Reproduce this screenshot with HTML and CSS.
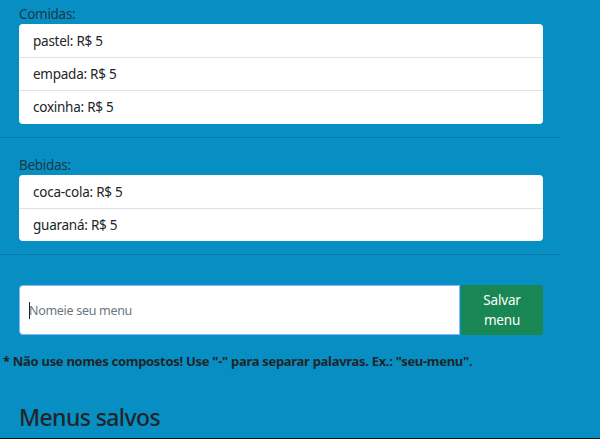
FILE: index.html
```html
<!DOCTYPE html>
<html lang="pt-BR">
<head>
<meta charset="utf-8">
<title>Menu</title>
<link rel="stylesheet" href="styles.css">
</head>
<body>
<main class="page">
  <section class="group group-first">
    <div class="group-label">Comidas:</div>
    <ul class="list">
      <li class="list-item">pastel: R$ 5</li>
      <li class="list-item">empada: R$ 5</li>
      <li class="list-item">coxinha: R$ 5</li>
    </ul>
  </section>
  <hr class="divider">
  <section class="group group-second">
    <div class="group-label">Bebidas:</div>
    <ul class="list">
      <li class="list-item">coca-cola: R$ 5</li>
      <li class="list-item">guaraná: R$ 5</li>
    </ul>
  </section>
  <hr class="divider">
  <form class="save-form">
    <div class="input-wrap"><span class="caret"></span><input class="name-input" type="text" placeholder="Nomeie seu menu"></div>
    <button class="save-btn" type="button">Salvar<br>menu</button>
  </form>
  <p class="note">* Não use nomes compostos! Use "-" para separar palavras. Ex.: "seu-menu".</p>
  <h2 class="saved-title">Menus salvos</h2>
</main>
</body>
</html>
```
FILE: styles.css
```css
* { box-sizing: border-box; }
html, body { margin: 0; padding: 0; }
body {
  background: #078fc3;
  font-family: "Noto Sans", "Open Sans", sans-serif;
  color: #212529;
  height: 439px;
  overflow: hidden;
  border-bottom: 1px solid #111;
}
.page { width: 560px; }
.group { padding: 17px 17px 0 19px; }
.group-first { padding-top: 4px; }
.group-label {
  font-size: 13.5px;
  letter-spacing: -0.3px;
  line-height: 20px;
  color: #173a48;
}
.list {
  list-style: none;
  margin: 0;
  padding: 0;
  background: #fff;
  border-radius: 4px;
  width: 524px;
}
.list-item {
  font-size: 13.5px;
  letter-spacing: -0.25px;
  line-height: 20px;
  padding: 6px 14px 6px 14px;
  border-top: 1px solid #dee2e6;
}
.list-item:first-child { border-top-color: transparent; }
.group-first .list-item:last-child { padding-bottom: 7px; }
.divider {
  margin: 13px 0 0 0;
  border: 0;
  border-top: 1px solid #0a7aa8;
  height: 0;
}
.save-form {
  display: flex;
  margin: 30px 0 0 19px;
  width: 524px;
  height: 50px;
}
.input-wrap {
  position: relative;
  flex: 1;
  display: flex;
}
.name-input {
  flex: 1;
  border: 1px solid #86b7fe;
  border-radius: 4px 0 0 4px;
  background: #fff;
  font-family: inherit;
  font-size: 12.5px;
  letter-spacing: -0.3px;
  padding: 0 9px;
  color: #212529;
  outline: none;
  margin-right: 1px;
}
.name-input::placeholder { color: #6c757d; }
.caret {
  position: absolute;
  left: 10px;
  top: 17px;
  width: 1px;
  height: 17px;
  background: #222;
}
.save-btn {
  width: 82px;
  background: #198754;
  color: #fff;
  border: 0;
  border-radius: 0 4px 4px 0;
  font-family: inherit;
  font-size: 13.5px;
  letter-spacing: -0.2px;
  line-height: 20px;
  padding: 0;
}
.note {
  margin: 16px 0 0 3px;
  font-size: 13px;
  letter-spacing: -0.3px;
  line-height: 20px;
  font-weight: bold;
}
.saved-title {
  margin: 30px 0 0 19px;
  font-size: 23px;
  letter-spacing: -0.6px;
  font-weight: 500;
  line-height: 32px;
}
```
